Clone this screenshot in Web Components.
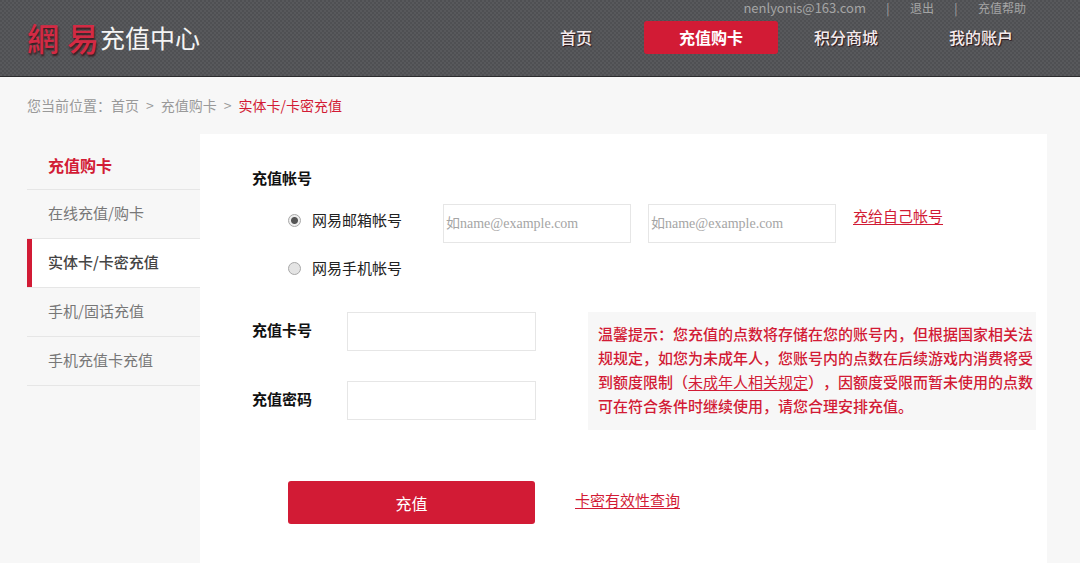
<!DOCTYPE html>
<html lang="zh-CN">
<head>
<meta charset="utf-8">
<title>网易充值中心</title>
<style>
  :root {
    --brand: #d21b35;
    --page: #f7f7f7;
    --line: #e6e6e6;
    --muted: #999;
    --gutter-left: 27px;
    --gutter-right: 33px;
  }
  body {
    margin: 0;
    min-height: 100vh;
    display: flex;
    flex-direction: column;
    background: var(--page);
    color: #222;
    font: 15px/24px "Noto Sans CJK SC", sans-serif;
  }
</style>
</head>
<body>
<site-header>
  <top-link slot="top">nenlyonis@163.com</top-link>
  <top-link slot="top">退出</top-link>
  <top-link slot="top">充值帮助</top-link>
  <nav-tab>首页</nav-tab>
  <nav-tab current>充值购卡</nav-tab>
  <nav-tab>积分商城</nav-tab>
  <nav-tab>我的账户</nav-tab>
</site-header>
<crumb-trail></crumb-trail>
<page-body>
  <side-menu slot="side" heading="充值购卡">
    <side-item>在线充值/购卡</side-item>
    <side-item current>实体卡/卡密充值</side-item>
    <side-item>手机/固话充值</side-item>
    <side-item>手机充值卡充值</side-item>
  </side-menu>
  <recharge-form></recharge-form>
</page-body>

<script>
  const define = (name, html, setup) => {
    const template = document.createElement('template');
    template.innerHTML = html;
    customElements.define(name, class extends HTMLElement {
      constructor() {
        super();
        this.attachShadow({ mode: 'open' }).append(template.content.cloneNode(true));
      }
      connectedCallback() {
        if (setup) setup(this, this.shadowRoot);
      }
    });
  };

  define('top-link', `
    <style>
      :host { display: block; }
      :host(:not(:first-of-type)) { display: flex; }
      :host(:not(:first-of-type))::before { content: "|"; width: 44px; text-align: center; }
      :host(:first-of-type) { font-size: 13px; }
      a { color: inherit; text-decoration: none; }
    </style>
    <a href="#"><slot></slot></a>`);

  define('nav-tab', `
    <style>
      :host { display: block; width: 134px; }
      a {
        display: block; border-radius: 3px; text-align: center;
        font: 500 16px/33px "Noto Sans CJK SC", sans-serif;
        color: #f3eaec; text-decoration: none; text-shadow: 1px 1px 1px #2b1418;
      }
      :host([current]) a { background: var(--brand); color: #fff; font-weight: 700; text-shadow: none; }
    </style>
    <a href="#"><slot></slot></a>`);

  define('site-header', `
    <style>
      :host {
        display: flex; justify-content: space-between; box-sizing: border-box; height: 77px;
        padding: 0 calc(var(--gutter-right) - 1px) 0 var(--gutter-left);
        border-bottom: 1px solid #2c2c2e;
        background: #535457 repeating-conic-gradient(#58595c 0 25%, #4f5053 0 50%) 0 0 / 4px 4px;
      }
      .logo { display: flex; align-items: center; height: 74px; color: #f4f4f4; text-decoration: none; font-size: 25px; }
      .mark {
        color: #d32a44; font-size: 32px; font-weight: 500; width: 73px;
        display: flex; gap: 8px; text-shadow: 1px 2px 2px #3a1a20;
      }
      .right { display: flex; flex-direction: column; align-items: flex-end; }
      .top {
        display: flex; height: 21px; padding-right: 22px; color: #a5a5a5;
        font: 12px/16px "Noto Sans CJK SC", sans-serif;
      }
      nav { display: flex; gap: 1px; }
    </style>
    <a class="logo" href="#"><span class="mark"><span>網</span><span>易</span></span><span>充值中心</span></a>
    <div class="right">
      <div class="top"><slot name="top"></slot></div>
      <nav><slot></slot></nav>
    </div>`);

  define('crumb-trail', `
    <style>
      :host { display: block; padding: 0 var(--gutter-right) 0 var(--gutter-left); color: var(--muted); font-size: 14px; line-height: 57px; }
      nav { display: flex; gap: 7px; }
      a { color: inherit; text-decoration: none; }
      a.here { color: var(--brand); }
    </style>
    <nav aria-label="位置">
      <span>您当前位置：<a href="#">首页</a></span><span>&gt;</span>
      <a href="#">充值购卡</a><span>&gt;</span>
      <a class="here" href="#" aria-current="page">实体卡/卡密充值</a>
    </nav>`);

  define('page-body', `
    <style>
      :host { display: flex; flex: 1; padding: 0 var(--gutter-right) 0 var(--gutter-left); }
      aside { flex: 0 0 173px; }
      main { flex: 1; min-width: 0; background: #fff; }
    </style>
    <aside><slot name="side"></slot></aside>
    <main><slot></slot></main>`);

  define('side-menu', `
    <style>
      :host { display: block; }
      h2 {
        margin: 0; padding: 8px 0 0 21px; border-bottom: 1px solid var(--line);
        color: var(--brand); font-size: 16px; line-height: 47px;
      }
    </style>
    <h2></h2>
    <nav><slot></slot></nav>`,
    (host, root) => { root.querySelector('h2').textContent = host.getAttribute('heading'); });

  define('side-item', `
    <style>
      :host { display: block; border-bottom: 1px solid var(--line); }
      a { display: block; padding: 0 0 2px 21px; color: #777; font-size: 15px; line-height: 46px; text-decoration: none; }
      :host([current]) a { padding-left: 16px; border-left: 5px solid var(--brand); background: #fff; color: #444; font-weight: 500; }
    </style>
    <a href="#"><slot></slot></a>`);

  define('hint-box', `
    <style>
      :host {
        display: block; box-sizing: border-box; padding: 10px 0 12px 10px;
        background: var(--page); color: var(--brand); font-weight: 500; text-spacing-trim: space-all;
      }
    </style>
    <slot></slot>`);

  define('recharge-form', `
    <style>
      :host { display: block; padding: 32px 11px 40px 52px; }
      fieldset { margin: 0; padding: 0; border: 0; }
      legend { padding: 0; }
      legend, .name { font-weight: 700; color: #111; }
      .account { display: flex; align-items: flex-start; padding: 14px 0 0 36px; }
      .kinds { display: grid; gap: 24px; width: 155px; padding-top: 4px; }
      .kinds label { display: flex; align-items: center; gap: 11px; }
      input[type=radio] {
        appearance: none; box-sizing: border-box; width: 13px; height: 13px; margin: 0;
        border: 1px solid #a8a8a8; border-radius: 50%; background: #e4e4e4;
      }
      input[type=radio]:checked { background: radial-gradient(circle, #555 0 3px, #eee 4px); }
      input.text {
        box-sizing: border-box; width: 189px; height: 39px; margin: 0; padding: 0 2px;
        border: 1px solid var(--line); background: #fff; outline: 0;
        font: 14px "Liberation Serif", "Noto Sans CJK SC", serif;
      }
      input.text::placeholder { color: #a5a5a5; }
      .mails { display: flex; gap: 17px; }
      .mails input.text { width: 188px; }
      a { color: var(--brand); font-weight: 400; text-decoration: underline; text-underline-offset: 2px; }
      .card { display: flex; align-items: flex-start; gap: 52px; padding-top: 32px; }
      .fields { display: grid; gap: 30px; }
      .field { display: flex; }
      .name { width: 95px; line-height: 36px; }
      hint-box { flex: 1; }
      .actions { display: flex; align-items: flex-start; gap: 40px; padding: 51px 0 0 36px; }
      .actions a { line-height: 38px; }
      button {
        width: 247px; height: 43px; padding: 0; border: 0; border-radius: 3px;
        background: var(--brand); color: #fff; font: 16px "Noto Sans CJK SC", sans-serif;
      }
    </style>
    <form>
      <fieldset>
        <legend>充值帐号</legend>
        <div class="account">
          <div class="kinds">
            <label><input type="radio" name="kind" checked>网易邮箱帐号</label>
            <label><input type="radio" name="kind">网易手机帐号</label>
          </div>
          <div class="mails">
            <input class="text" type="text" placeholder="如name@example.com" aria-label="邮箱帐号">
            <input class="text" type="text" placeholder="如name@example.com" aria-label="确认邮箱帐号">
            <a href="#">充给自己帐号</a>
          </div>
        </div>
      </fieldset>
      <div class="card">
        <div class="fields">
          <div class="field"><label class="name" for="card">充值卡号</label><input class="text" id="card" type="text"></div>
          <div class="field"><label class="name" for="code">充值密码</label><input class="text" id="code" type="password"></div>
        </div>
        <hint-box>温馨提示：您充值的点数将存储在您的账号内，但根据国家相关法规规定，如您为未成年人，您账号内的点数在后续游戏内消费将受到额度限制（<a href="#">未成年人相关规定</a>），因额度受限而暂未使用的点数可在符合条件时继续使用，请您合理安排充值。</hint-box>
      </div>
      <div class="actions">
        <button type="button">充值</button>
        <a href="#">卡密有效性查询</a>
      </div>
    </form>`);
</script>
</body>
</html>
